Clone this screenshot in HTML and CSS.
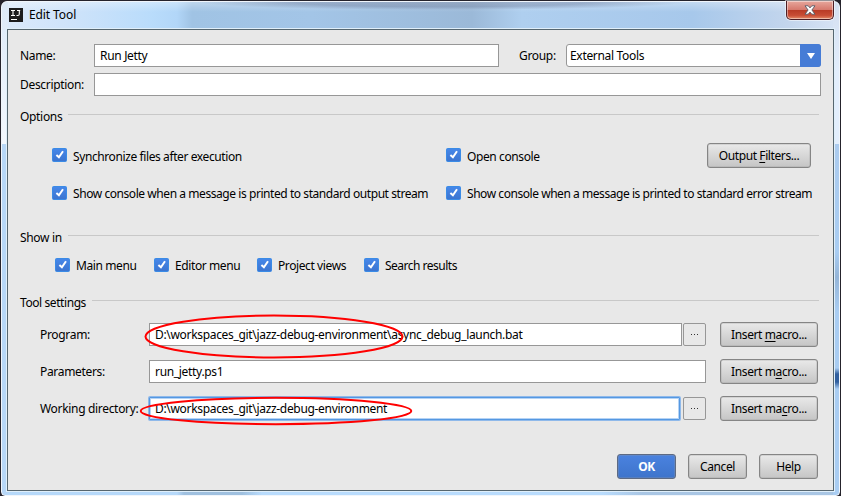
FILE: index.html
```html
<!DOCTYPE html>
<html lang="en">
<head>
<meta charset="utf-8">
<title>Edit Tool</title>
<link rel="stylesheet" href="styles.css">
</head>
<body>
<svg class="defs" width="0" height="0" aria-hidden="true">
  <defs>
    <linearGradient id="blue" x1="0" y1="0" x2="0" y2="1"><stop offset="0" stop-color="#4688ea"/><stop offset="1" stop-color="#3b74cf"/></linearGradient>
    <symbol id="check" viewBox="0 0 15 14">
      <rect x=".5" y=".5" width="14" height="13" rx="1" fill="url(#blue)" stroke="#3a8be6"/>
      <path d="M4.4 7 6.9 9.2 11 3.2" fill="none" stroke="#fff" stroke-width="2"/>
    </symbol>
  </defs>
</svg>
<div class="window">
  <header class="titlebar">
    <svg class="logo" width="14" height="14" viewBox="0 0 14 14"><rect width="14" height="14" fill="#1c1c1e"/><path d="M2 2.5h4M4 2.5v5M2 7.5h4M8 2.5h3.2M10.3 2.5V6q0 1.5-1.4 1.5H7.5" stroke="#fff" stroke-width="1.1" fill="none"/><path d="M2 11.5h6" stroke="#fff"/></svg>
    <span class="title">Edit Tool</span>
    <button class="close" aria-label="Close"><svg width="12" height="10" viewBox="0 0 12 10"><path d="M1 .8h3.2L6 2.9 7.8.8H11L7.9 5 11 9.2H7.8L6 7.1 4.2 9.2H1L4.1 5Z" fill="#fff" stroke="#555a66" stroke-width=".9"/></svg></button>
  </header>
  <main class="dialog">
    <div class="row">
      <span class="label">Name:</span>
      <div class="input name">Run Jetty</div>
      <span class="group-label">Group:</span>
      <div class="combo"><span>External Tools</span><span class="arrow"><svg width="10" height="8" viewBox="0 0 10 8"><path d="M1 1h8L5 7Z" fill="#fff"/></svg></span></div>
    </div>
    <div class="row desc-row">
      <span class="label">Description:</span>
      <div class="input grow"></div>
    </div>
    <div class="section options"><span>Options</span><i></i></div>
    <div class="checks sync">
      <div class="check"><svg><use href="#check"/></svg><span>Synchronize files after execution</span></div>
      <div class="check"><svg><use href="#check"/></svg><span>Open console</span></div>
      <button class="button filters"><span>Output <u>F</u>ilters...</span></button>
    </div>
    <div class="checks streams">
      <div class="check"><svg><use href="#check"/></svg><span>Show console when a message is printed to standard output stream</span></div>
      <div class="check"><svg><use href="#check"/></svg><span>Show console when a message is printed to standard error stream</span></div>
    </div>
    <div class="section showin"><span>Show in</span><i></i></div>
    <div class="menus">
      <div class="check"><svg><use href="#check"/></svg><span>Main menu</span></div>
      <div class="check"><svg><use href="#check"/></svg><span>Editor menu</span></div>
      <div class="check"><svg><use href="#check"/></svg><span>Project views</span></div>
      <div class="check"><svg><use href="#check"/></svg><span>Search results</span></div>
    </div>
    <div class="section settings"><span>Tool settings</span><i></i></div>
    <div class="fields">
      <div class="field">
        <span>Program:</span>
        <div class="pair"><div class="input grow">D:\workspaces_git\jazz-debug-environment\async_debug_launch.bat</div><button class="browse" aria-label="Browse"><i></i><i></i><i></i></button>
          <svg class="mark first" width="262" height="47"><ellipse cx="131" cy="23.5" rx="128.5" ry="21"/></svg></div>
        <button class="button"><span>Insert <u>m</u>acro...</span></button>
      </div>
      <div class="field">
        <span>Parameters:</span>
        <div class="pair"><div class="input grow">run_jetty.ps1</div></div>
        <button class="button"><span>Insert m<u>a</u>cro...</span></button>
      </div>
      <div class="field">
        <span>Working directory:</span>
        <div class="pair"><div class="input grow focus">D:\workspaces_git\jazz-debug-environment</div><button class="browse" aria-label="Browse"><i></i><i></i><i></i></button>
          <svg class="mark second" width="276" height="32"><ellipse cx="138" cy="16" rx="135.3" ry="13.2"/></svg></div>
        <button class="button"><span>Insert ma<u>c</u>ro...</span></button>
      </div>
    </div>
    <footer class="actions">
      <button class="button ok">OK</button>
      <button class="button">Cancel</button>
      <button class="button">Help</button>
    </footer>
  </main>
</div>
</body>
</html>
```
FILE: styles.css
```css
* { box-sizing: border-box; }
body { margin: 0; background: #25232c; color: #000; font: 12px/16px "Noto Sans", sans-serif; letter-spacing: -.32px; white-space: nowrap; overflow: hidden; }
.defs { position: absolute; }
button { font: inherit; letter-spacing: inherit; color: inherit; padding: 0; margin: 0; }
.window {
  width: 839px; height: 495px; margin: 1px; padding: 0 5px 4px; border: 1px solid #f0f5fb; border-radius: 6px 6px 4px 4px;
  background:
    linear-gradient(#d4dff0 0, #e2eefc 70px, #e2eefc 142px, #abcbee 142px, #a9cdf2 250px, #94b5d8 275px, #a9cdf2 310px, #a9cdf2 366px, #315f9e 372px, #315f9e 380px, #a9cdf2 387px) right / 6px 100% no-repeat,
    linear-gradient(#dce9f8 0, #f3f8fe 142px, #b7d7f7 142px, #b7d7f7 100%) left / 6px 100% no-repeat,
    linear-gradient(90deg, #b6d9fa 0 175px, #9fc0df 182px 240px, #b9dcfd 260px 600px, #a9c6e4 640px) bottom / 100% 6px no-repeat,
    radial-gradient(ellipse 245px 8px at 440px 0, #5d6f9266 60%, transparent) top / 100% 9px no-repeat,
    linear-gradient(#ffffff50, transparent 10px) top / 100% 28px no-repeat,
    linear-gradient(90deg, #dceafb 0, #cee3fa 70px, #b9dcfb 150px, #b2d6f8 175px, #a0c3e4 190px, #a3c5e7 310px, #9bb9d8 470px, #afcfef 520px, #a7c8eb 690px, #c4d6ed 790px, #d8e4f5 100%);
}
.titlebar { height: 27px; display: flex; align-items: flex-start; }
.logo { margin: 6px 0 0 2px; }
.title { margin: 5px 0 0 6px; letter-spacing: -.1px; }
.close { margin: -1px 0 0 auto; width: 48px; height: 19px; display: grid; place-items: center; border: 1px solid #4c1e25; border-top: 0; border-radius: 0 0 5px 5px; background: linear-gradient(#e7a79d 0, #d6796d 48%, #b83a25 50%, #c84d35 80%, #e58b68); box-shadow: inset 0 0 0 1px #ffffff70, 0 0 0 1px #ffffff80; }
.dialog { width: 827px; height: 462px; border: 1px solid #56666f; outline: 1px solid #e0effa; background: #e8e8e8; padding: 14px 12px 0; }
.row { display: flex; align-items: center; height: 23px; }
.label { width: 74px; }
.input { height: 23px; border: 1px solid #979797; background: #fff; padding: 3px 5px; line-height: 16px; }
.grow { flex: 1; }
.name { width: 405px; }
.group-label { width: 67px; padding-left: 20px; }
.combo { flex: 1; height: 23px; border: 1px solid #979797; border-radius: 3px; background: #fff; padding-left: 3px; display: flex; justify-content: space-between; align-items: center; }
.arrow { width: 21px; height: 23px; margin-right: -1px; background: #467cd6; border-radius: 0 3px 3px 0; display: grid; place-items: center; }
.desc-row { margin-top: 6px; }
.section { display: flex; align-items: center; height: 16px; margin-right: 2px; }
.section span { padding-top: 2px; }
.section i { flex: 1; height: 1px; background: #c8c8c8; margin: -4px 0 0 6px; }
.options { margin-top: 12px; }
.checks { display: grid; grid-template-columns: 394px 261px 104px; align-items: center; padding-left: 32px; }
.check { display: flex; align-items: flex-start; gap: 6px; height: 15px; letter-spacing: -.4px; }
.check svg { width: 15px; height: 14px; flex: none; }
.sync { height: 25px; margin-top: 19px; }
.sync .check span { padding-top: 1px; }
.streams { height: 14px; margin-top: 18px; align-items: start; letter-spacing: -.435px; }
.streams .check { letter-spacing: inherit; }
.streams .check:last-child { letter-spacing: -.45px; }
.showin { margin-top: 29px; }
.menus { display: grid; grid-template-columns: 99px 103px 107px 120px; height: 14px; margin: 13px 0 0 35px; }
.menus .check:last-child { letter-spacing: -.5px; }
.settings { margin-top: 22px; letter-spacing: -.42px; }
.fields { display: grid; gap: 12px; margin: 12px 2px 0 20px; }
.field { display: grid; grid-template-columns: 109px 557px 112px; align-items: center; height: 25px; }
.field > .button { margin-left: 14px; width: 98px; }
.field > .pair { display: flex; gap: 1px; position: relative; }
.button { height: 25px; border: 1px solid #858585; border-radius: 3px; background: linear-gradient(#e9e9e9, #c5c5c5); box-shadow: inset 0 0 0 .5px #9998; display: flex; align-items: center; justify-content: center; letter-spacing: -.4px; }
.button u { text-underline-offset: 2px; text-decoration-thickness: 1px; text-decoration-skip-ink: none; }
.browse { width: 23px; height: 23px; border: 1px solid #979797; border-radius: 2px; background: #e8e8e8; display: flex; gap: 2px; align-items: center; justify-content: center; }
.browse i { width: 1px; height: 1px; background: #333; }
.focus { border: 1px solid #5598e2; box-shadow: inset 0 0 0 1px #b5d3f5, 0 0 0 1px #8fb9ea; border-radius: 1px; margin-right: 2px; }
.mark { position: absolute; }
.mark ellipse { fill: none; stroke: #f00; stroke-width: 2; }
.first { left: -6px; top: -10px; }
.second { left: -11px; top: -2px; }
.actions { display: flex; justify-content: flex-end; gap: 12px; margin: 33px 3px 0 0; }
.actions .button { width: 59px; }
.actions .ok { background: linear-gradient(#4a82df, #3e74cb); border-color: #5d6a83; color: #fff; font-weight: 700; }
```
